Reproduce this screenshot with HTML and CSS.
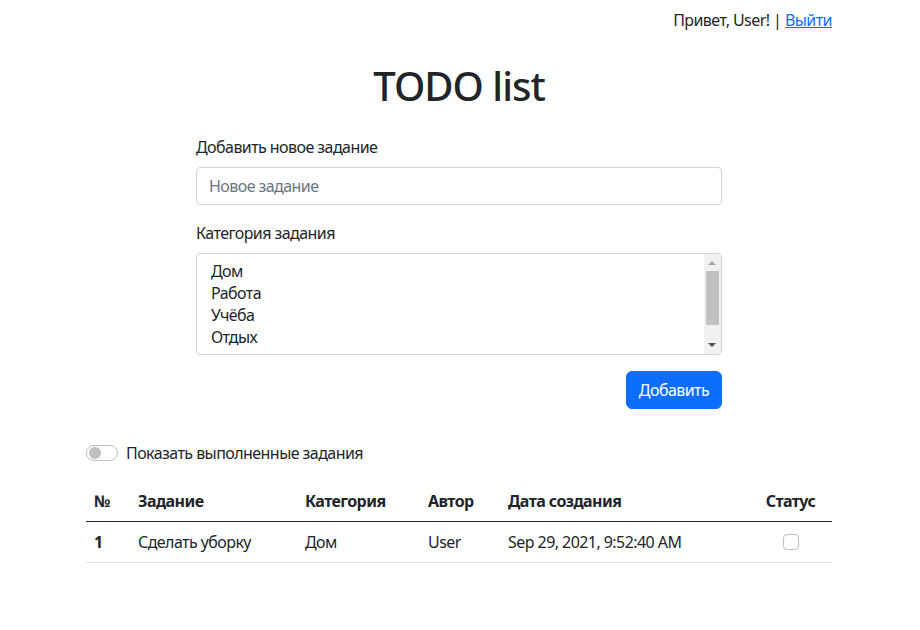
FILE: index.html
```html
<!DOCTYPE html>
<html lang="ru">
<head>
<meta charset="utf-8">
<title>TODO list</title>
<link rel="stylesheet" href="styles.css">
</head>
<body>
<div class="container">
  <div class="topbar">Привет, User! | <a href="#" class="link">Выйти</a></div>
  <h1 class="title">TODO list</h1>
  <form class="task-form">
    <div class="field">
      <label class="form-label">Добавить новое задание</label>
      <input class="form-control" type="text" placeholder="Новое задание">
    </div>
    <div class="field">
      <label class="form-label">Категория задания</label>
      <div class="select">
        <div class="options">
          <div class="option">Дом</div>
          <div class="option">Работа</div>
          <div class="option">Учёба</div>
          <div class="option">Отдых</div>
        </div>
        <div class="scrollbar">
          <div class="arrow arrow-up"></div>
          <div class="track"><div class="thumb"></div></div>
          <div class="arrow arrow-down"></div>
        </div>
      </div>
    </div>
    <div class="actions">
      <button type="button" class="btn">Добавить</button>
    </div>
  </form>
  <div class="switch-row">
    <span class="switch"><span class="knob"></span></span>
    <span class="switch-label">Показать выполненные задания</span>
  </div>
  <table class="table">
    <thead>
      <tr>
        <th class="c-num">№</th>
        <th class="c-task">Задание</th>
        <th class="c-cat">Категория</th>
        <th class="c-author">Автор</th>
        <th class="c-date">Дата создания</th>
        <th class="c-status">Статус</th>
      </tr>
    </thead>
    <tbody>
      <tr>
        <td class="c-num bold">1</td>
        <td>Сделать уборку</td>
        <td>Дом</td>
        <td>User</td>
        <td>Sep 29, 2021, 9:52:40 AM</td>
        <td class="c-status"><span class="checkbox"></span></td>
      </tr>
    </tbody>
  </table>
</div>
</body>
</html>
```
FILE: styles.css
```css
* { box-sizing: border-box; }
html, body { margin: 0; padding: 0; background: #fff; }
body {
  font-family: "Noto Sans", "Open Sans", sans-serif;
  font-size: 16px;
  line-height: 24px;
  color: #212529;
  letter-spacing: -0.035em;
}
.container {
  width: 746px;
  margin: 0 0 0 86px;
}
.topbar {
  padding-top: 8px;
  text-align: right;
}
.link { color: #0d6efd; text-decoration: underline; }
.title {
  margin: 30px 0 0;
  text-align: center;
  font-size: 40px;
  line-height: 48px;
  font-weight: 500;
  letter-spacing: -0.025em;
}
.task-form {
  width: 526px;
  margin: 25px auto 0;
}
.field { margin-bottom: 16px; }
.form-label {
  display: block;
  margin-bottom: 8px;
}
.form-control {
  display: block;
  width: 100%;
  height: 38px;
  padding: 6px 12px;
  font-family: inherit;
  font-size: 16px;
  letter-spacing: -0.035em;
  color: #212529;
  border: 1px solid #ced4da;
  border-radius: 4px;
  outline: none;
}
.form-control::placeholder { color: #6c757d; }
.select {
  display: flex;
  height: 102px;
  border: 1px solid #ced4da;
  border-radius: 4px;
  overflow: hidden;
}
.options {
  flex: 1;
  padding: 6px 14px;
  line-height: 22px;
  overflow: hidden;
}
.scrollbar {
  width: 17px;
  background: #f1f1f1;
  display: flex;
  flex-direction: column;
}
.arrow { height: 17px; position: relative; }
.arrow-up::after, .arrow-down::after {
  content: "";
  position: absolute;
  left: 4px;
  width: 0; height: 0;
  border-left: 4px solid transparent;
  border-right: 4px solid transparent;
}
.arrow-up::after { top: 7px; border-bottom: 4px solid #a3a3a3; }
.arrow-down::after { top: 6px; border-top: 4px solid #505050; }
.track { flex: 1; padding: 0 2px; }
.thumb { height: 54px; background: #c1c1c1; }
.actions { display: flex; justify-content: flex-end; }
.btn {
  width: 96px;
  height: 38px;
  border: 1px solid #0d6efd;
  background: #0d6efd;
  color: #fff;
  border-radius: 6px;
  font-family: inherit;
  font-size: 16px;
  letter-spacing: -0.035em;
  padding: 0;
}
.switch-row {
  display: flex;
  align-items: center;
  margin-top: 32px;
  height: 24px;
  gap: 8px;
}
.switch {
  width: 32px;
  height: 16px;
  border: 1px solid rgba(0,0,0,.25);
  border-radius: 8px;
  display: flex;
  align-items: center;
  padding-left: 2px;
}
.knob {
  width: 12px; height: 12px;
  border-radius: 50%;
  background: #bfbfbf;
}
.table {
  width: 746px;
  margin-top: 16px;
  border-collapse: collapse;
  table-layout: fixed;
}
.table th, .table td {
  padding: 8px;
  text-align: left;
  line-height: 24px;
}
.table th {
  font-weight: 700;
  border-bottom: 1px solid #212529;
}
.table td { border-bottom: 1px solid #dee2e6; }
.c-num { width: 44px; }
.c-task { width: 167px; }
.c-cat { width: 123px; }
.c-author { width: 80px; }
.c-date { width: 249px; }
.c-status { width: 83px; text-align: center !important; }
.bold { font-weight: 700; }
.checkbox {
  display: inline-block;
  vertical-align: middle;
  width: 16px; height: 16px;
  border: 1px solid rgba(0,0,0,.25);
  border-radius: 4px;
  margin-top: -3px;
}
```
